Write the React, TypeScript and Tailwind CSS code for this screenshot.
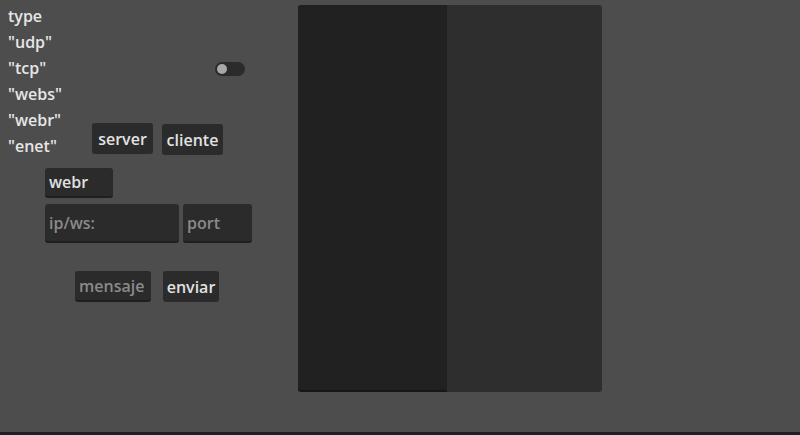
// Pantalla de red: tipo de conexión, servidor/cliente y envío de mensajes.
const font = { fontFamily: '"Open Sans", "Noto Sans", sans-serif' };

const tipos = ["type", '"udp"', '"tcp"', '"webs"', '"webr"', '"enet"'];

function Boton({ label, className }: { label: string; className: string }) {
  return (
    <button
      type="button"
      className={[
        "h-[31px] rounded-[3px] bg-[#2b2b2b] text-[16px] font-semibold text-[#e2e2e2] leading-none",
        className,
      ].join(" ")}
    >
      {label}
    </button>
  );
}

function Campo({ placeholder, value, className }: { placeholder?: string; value?: string; className: string }) {
  return (
    <div
      className={[
        "flex items-center rounded-[3px] bg-[#2b2b2b] border-b-2 border-[#1f1f1f] px-1 text-[16px] font-semibold",
        value ? "text-[#e0e0e0]" : "text-[#8a8a8a]",
        className,
      ].join(" ")}
    >
      {value ?? placeholder}
    </div>
  );
}

export default function App() {
  return (
    <div className="w-[800px] h-[435px] bg-[#4d4d4d] flex flex-col overflow-hidden select-none" style={font}>
      <div className="flex-1 flex">
        {/* columna izquierda */}
        <div className="w-[298px] flex flex-col">
          <div className="flex items-start">
            <ul className="pl-2 pt-[3px] w-[92px] text-[16px] font-semibold text-[#e6e6e6] leading-[26px]">
              {tipos.map((t) => (
                <li key={t}>{t}</li>
              ))}
            </ul>
            <div className="flex flex-col">
              {/* switch */}
              <div className="mt-[62px] ml-[123px] w-[30px] h-[14px] rounded-full bg-[#2b2b2b] flex items-center pl-[2px]">
                <span className="w-[10px] h-[10px] rounded-full bg-[#a8a8a8]" />
              </div>
              <div className="mt-[47px] flex items-start gap-[9px]">
                <Boton label="server" className="w-[61px]" />
                <Boton label="cliente" className="w-[61px] mt-px" />
              </div>
            </div>
          </div>

          <Campo value="webr" className="ml-[45px] mt-[9px] w-[68px] h-[30px]" />

          <div className="ml-[45px] mt-[6px] flex gap-[4px]">
            <Campo placeholder="ip/ws:" className="w-[134px] h-[39px]" />
            <Campo placeholder="port" className="w-[69px] h-[39px]" />
          </div>

          <div className="ml-[75px] mt-[28px] flex gap-[12px]">
            <Campo placeholder="mensaje" className="w-[76px] h-[31px]" />
            <Boton label="enviar" className="w-[56px] h-[30px]" />
          </div>
        </div>

        {/* panel de mensajes */}
        <div className="mt-[5px] h-[387px] w-[304px] flex rounded-[3px] bg-[#2e2e2e] overflow-hidden">
          <div className="w-[149px] h-full bg-[#212121] border-b-2 border-[#171717] rounded-bl-[3px]" />
          <div className="flex-1" />
        </div>
      </div>
      <div className="h-[3px] bg-[#1d2023]" />
    </div>
  );
}
